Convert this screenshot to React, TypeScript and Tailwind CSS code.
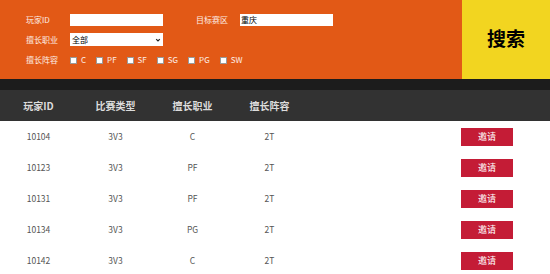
import { type FC } from 'react';

const FONT = { fontFamily: '"Noto Sans CJK SC", "Noto Sans", sans-serif' };

const POSITIONS = ['C', 'PF', 'SF', 'SG', 'PG', 'SW'];

const PLAYERS = [
    { id: '10104', type: '3V3', pos: 'C', lineup: '2T' },
    { id: '10123', type: '3V3', pos: 'PF', lineup: '2T' },
    { id: '10131', type: '3V3', pos: 'PF', lineup: '2T' },
    { id: '10134', type: '3V3', pos: 'PG', lineup: '2T' },
    { id: '10142', type: '3V3', pos: 'C', lineup: '2T' },
];

const COLUMNS = ['玩家ID', '比赛类型', '擅长职业', '擅长阵容'];

const SearchPanel: FC = () => (
    <div className="flex h-[79px]">
        <div className="flex-1 bg-[#e25916] pl-[26px] pt-[14px] text-[8px] text-white/90">
            <div className="flex h-[12px] items-center">
                <span className="w-[44px]">玩家ID</span>
                <div className="h-[12px] w-[93px] bg-white" />
                <span className="ml-[33px] w-[44px]">目标赛区</span>
                <div className="flex h-[12px] w-[93px] items-center bg-white pl-[1px] text-[8px] text-black">重庆</div>
            </div>
            <div className="mt-[7px] flex h-[13px] items-center">
                <span className="w-[44px]">擅长职业</span>
                <div className="flex h-[13px] w-[93px] items-center justify-between bg-white px-[2px] text-black">
                    <span>全部</span>
                    <svg className="h-[6px] w-[6px]" viewBox="0 0 10 10" fill="none" stroke="#222" strokeWidth="2">
                        <path d="M2 3.5 5 6.5 8 3.5" />
                    </svg>
                </div>
            </div>
            <div className="mt-[10px] flex h-[8px] items-center">
                <span className="w-[44px]">擅长阵容</span>
                <div className="flex items-center gap-[10px]">
                    {POSITIONS.map((p) => (
                        <label key={p} className="flex items-center gap-[4px]">
                            <span className="h-[7px] w-[7px] border border-[#999] bg-white" />
                            <span>{p}</span>
                        </label>
                    ))}
                </div>
            </div>
        </div>
        <button className="flex w-[88px] items-center justify-center bg-[#f2d520] pb-[2px] text-[19px] font-bold text-black">
            搜索
        </button>
    </div>
);

const App: FC = () => (
    <div className="h-[274px] w-[550px] overflow-hidden bg-white" style={FONT}>
        <SearchPanel />
        <div className="h-[11px] bg-[#1c1c1c]" />
        <div className="flex h-[31px] items-center bg-[#323232] text-[10px] font-bold text-[#dcdcdc]">
            {COLUMNS.map((h) => (
                <div key={h} className="w-[77px] text-center">{h}</div>
            ))}
        </div>
        {PLAYERS.map((p) => (
            <div key={p.id} className="flex h-[31px] items-center text-[8.5px] text-[#555]">
                <div className="w-[77px] text-center">{p.id}</div>
                <div className="w-[77px] text-center">{p.type}</div>
                <div className="w-[77px] text-center">{p.pos}</div>
                <div className="w-[77px] text-center">{p.lineup}</div>
                <div className="ml-[153px] flex h-[18px] w-[52px] items-center justify-center bg-[#c41c36] text-[9px] text-white">
                    邀请
                </div>
            </div>
        ))}
    </div>
);

export default App;
